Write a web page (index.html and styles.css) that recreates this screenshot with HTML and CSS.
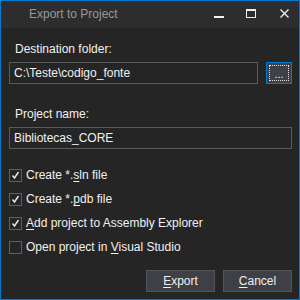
FILE: index.html
```html
<!DOCTYPE html>
<html>
<head>
<meta charset="utf-8">
<link rel="stylesheet" href="styles.css">
</head>
<body>
<div class="window">
  <div class="titlebar">
    <span class="title">Export to Project</span>
    <div class="controls">
      <span class="ctl"><svg width="10" height="10" viewBox="0 0 10 10"><rect x="0" y="7" width="10" height="2" fill="#f1f1f1"/></svg></span>
      <span class="ctl"><svg width="10" height="10" viewBox="0 0 10 10"><rect x="0.5" y="0.5" width="9" height="8" fill="none" stroke="#f1f1f1" stroke-width="1"/><rect x="0" y="0" width="10" height="2" fill="#f1f1f1"/></svg></span>
      <span class="ctl close"><svg width="9" height="9" viewBox="0 0 9 9"><path d="M0.5 0.5 L8.5 8.5 M8.5 0.5 L0.5 8.5" stroke="#f1f1f1" stroke-width="1.3"/></svg></span>
    </div>
  </div>
  <div class="content">
    <div class="label">Destination folder:</div>
    <div class="row">
      <div class="input grow">C:\Teste\codigo_fonte</div>
      <div class="browse"><span class="focus">...</span></div>
    </div>
    <div class="label second">Project name:</div>
    <div class="input">Bibliotecas_CORE</div>
    <div class="checks">
      <div class="check"><span class="box"><svg width="11" height="11" viewBox="0 0 11 11"><path d="M2.5 5.5 L4.5 8 L8.5 2" fill="none" stroke="#e6e6e6" stroke-width="1.5"/></svg></span><span>Create *.<u>s</u>ln file</span></div>
      <div class="check"><span class="box"><svg width="11" height="11" viewBox="0 0 11 11"><path d="M2.5 5.5 L4.5 8 L8.5 2" fill="none" stroke="#e6e6e6" stroke-width="1.5"/></svg></span><span>Create *.<u>p</u>db file</span></div>
      <div class="check"><span class="box"><svg width="11" height="11" viewBox="0 0 11 11"><path d="M2.5 5.5 L4.5 8 L8.5 2" fill="none" stroke="#e6e6e6" stroke-width="1.5"/></svg></span><span><u>A</u>dd project to Assembly Explorer</span></div>
      <div class="check"><span class="box"></span><span>Open project in <u>V</u>isual Studio</span></div>
    </div>
    <div class="buttons">
      <div class="btn"><u>E</u>xport</div>
      <div class="btn"><u>C</u>ancel</div>
    </div>
  </div>
</div>
</body>
</html>
```

FILE: styles.css
```css
html, body {
  margin: 0;
  padding: 0;
  background: #252526;
}
body {
  font-family: "Liberation Sans", Arial, sans-serif;
  font-size: 12px;
  color: #f1f1f1;
}
.window {
  width: 300px;
  height: 300px;
  box-sizing: border-box;
  border: 1px solid #007acc;
  background: #252526;
  display: flex;
  flex-direction: column;
}
.titlebar {
  height: 27px;
  background: #2d2d30;
  display: flex;
  align-items: center;
}
.title {
  padding-left: 28px;
  color: #999999;
  line-height: 16px;
  margin-top: -1px;
  flex: 1;
}
.controls {
  display: flex;
  height: 27px;
}
.ctl {
  width: 32px;
  height: 27px;
  box-sizing: border-box;
  padding-top: 8px;
  display: flex;
  justify-content: center;
  align-items: flex-start;
}
.ctl.close {
  padding-left: 2px;
}
.content {
  flex: 1;
  display: flex;
  flex-direction: column;
  padding: 13px 7px 7px 8px;
}
.label {
  line-height: 16px;
  padding-left: 6px;
  margin-bottom: 5px;
}
.label.second {
  margin-top: 22px;
}
.row {
  display: flex;
  gap: 8px;
}
.grow {
  flex: 1;
}
.input {
  height: 22px;
  box-sizing: border-box;
  border: 1px solid #5a5a5a;
  padding-left: 4px;
  line-height: 20px;
  white-space: nowrap;
}
.browse {
  width: 26px;
  height: 22px;
  box-sizing: border-box;
  border: 1px solid #007acc;
  background: #3f3f46;
  padding: 2px;
  display: flex;
}
.focus {
  flex: 1;
  border: 1px dotted #e0e0e0;
  display: flex;
  justify-content: center;
  align-items: flex-end;
  line-height: 12px;
  font-size: 11px;
}
.checks {
  margin-top: 14px;
  display: flex;
  flex-direction: column;
}
.check {
  height: 24px;
  display: flex;
  align-items: center;
  gap: 4px;
  white-space: nowrap;
}
.box {
  width: 13px;
  height: 13px;
  box-sizing: border-box;
  border: 1px solid #5f5f5f;
  background: #252526;
  display: flex;
  align-items: center;
  justify-content: center;
}
u {
  text-underline-offset: 2px;
}
.buttons {
  margin-top: auto;
  display: flex;
  justify-content: flex-end;
  gap: 8px;
}
.btn {
  width: 69px;
  height: 22px;
  box-sizing: border-box;
  border: 1px solid #54545c;
  background: #3f3f46;
  display: flex;
  align-items: center;
  justify-content: center;
  line-height: 16px;
}
```
